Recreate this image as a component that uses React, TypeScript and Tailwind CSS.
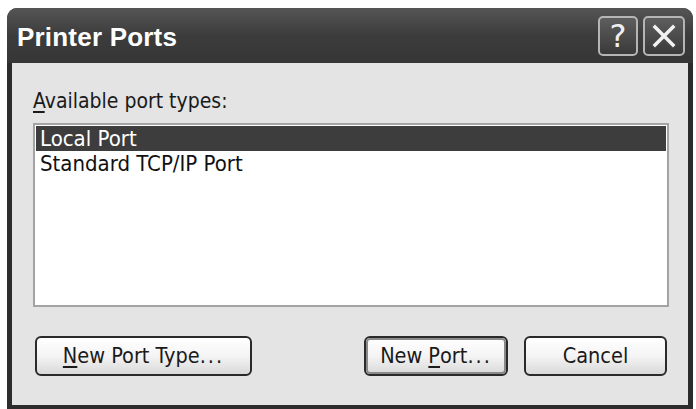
import React from "react";

const uiFont = { fontFamily: '"DejaVu Sans Condensed", "DejaVu Sans", sans-serif' };

function Dots() {
  return <span className="tracking-[2px]">...</span>;
}

function XpButton({
  children,
  width,
  isDefault = false,
}: {
  children: React.ReactNode;
  width: string;
  isDefault?: boolean;
}) {
  return (
    <button
      className={`${width} h-[40px] rounded-[6px] border-2 border-[#2a2a2a] bg-gradient-to-b from-[#ffffff] via-[#f4f4f4] to-[#d9d9d9] p-0 text-[21.5px] leading-none text-[#1a1a1a]`}
      style={uiFont}
    >
      <span
        className={`flex h-full w-full items-center justify-center rounded-[4px] ${
          isDefault ? "border-2 border-[#8a8a8a]" : "border-2 border-transparent"
        }`}
      >
        {children}
      </span>
    </button>
  );
}

export default function App() {
  return (
    <div className="h-[409px] w-[696px] overflow-hidden bg-white">
      <div className="ml-[7px] mt-[8px] flex h-[401px] w-[686px] flex-col overflow-hidden rounded-t-[10px] bg-[#2c2c2c]">
        {/* Title bar */}
        <div className="flex h-[55px] shrink-0 items-center bg-gradient-to-b from-[#555555] via-[#3c3c3c] to-[#363636] pl-[10px] pr-[8px]">
          <span
            className="flex-1 pt-[4px] text-[26px] font-bold tracking-[0.2px] text-white"
            style={{ fontFamily: '"Liberation Sans", Arial, sans-serif' }}
          >
            Printer Ports
          </span>
          <div className="flex gap-[5px]">
            <div className="flex h-[40px] w-[40px] items-center justify-center rounded-[5px] border-2 border-[#b5b5b5] bg-gradient-to-b from-[#5e5e5e] to-[#3a3a3a]">
              <span
                className="text-[32px] leading-none text-[#f0f0f0]"
                style={{ fontFamily: '"DejaVu Sans", sans-serif' }}
              >
                ?
              </span>
            </div>
            <div className="flex h-[40px] w-[42px] items-center justify-center rounded-[5px] border-2 border-[#b5b5b5] bg-gradient-to-b from-[#5e5e5e] to-[#3a3a3a]">
              <svg width="26" height="26" viewBox="0 0 26 26">
                <path d="M4 4 L22 22 M22 4 L4 22" stroke="#f2f2f2" strokeWidth="3.5" strokeLinecap="square" />
              </svg>
            </div>
          </div>
        </div>

        {/* Body */}
        <div className="mx-[5px] mb-[4px] flex flex-1 flex-col bg-[#e4e4e4] pl-[21px] pr-[19px]">
          <div className="mt-[26px] h-[25px] text-[21px] leading-[25px] text-[#1a1a1a]" style={uiFont}>
            <span className="underline underline-offset-[3px]">A</span>vailable port types:
          </div>

          <div
            className="mt-[9px] h-[184px] border-2 border-[#a3a3a3] bg-white p-[1px] text-[22px] leading-[25px]"
            style={uiFont}
          >
            <div className="h-[25px] bg-[#3d3d3d] pl-[4px] text-white">Local Port</div>
            <div className="h-[26px] pl-[4px] text-[#111]">Standard TCP/IP Port</div>
          </div>

          <div className="mt-[29px] flex px-[2px]">
            <XpButton width="w-[217px]">
              <span className="underline underline-offset-[3px]">N</span>ew Port Type<Dots />
            </XpButton>
            <div className="flex-1" />
            <XpButton width="w-[144px]" isDefault>
              New <span className="ml-[6px] underline underline-offset-[3px]">P</span>ort<Dots />
            </XpButton>
            <div className="w-[16px]" />
            <XpButton width="w-[143px]">Cancel</XpButton>
          </div>
        </div>
      </div>
    </div>
  );
}
